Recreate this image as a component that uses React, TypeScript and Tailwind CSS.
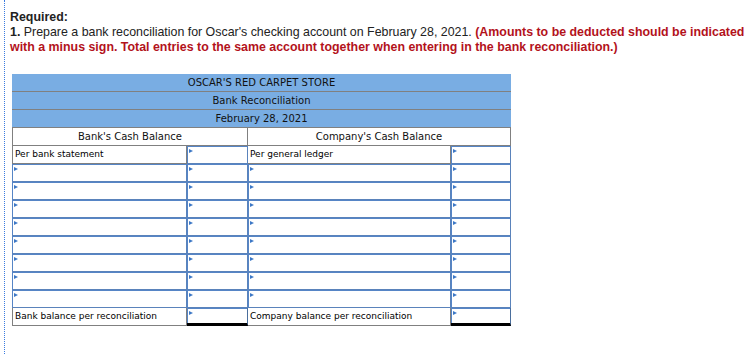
import React from "react";

const GRAY = "border-[#808080]";

// small blue flag that marks an input cell
const Marker = () => (
  <span className="absolute left-[1px] top-[2px] w-0 h-0 border-l-[4px] border-l-[#3d78c6] border-y-[2.5px] border-y-transparent" />
);

const InputCell = ({ w, total = false }: { w: string; total?: boolean }) => (
  <div
    className={`${w} h-full border-r ${total ? "border-r-[#4a6e9c] border-b-[3px] border-b-black" : "border-b border-[#5a83bb]"}`}
  >
    <div className="relative h-full border-t border-l border-[#5685c6]">
      <Marker />
    </div>
  </div>
);

const Label = ({ w, text, first = false }: { w: string; text: string; first?: boolean }) => (
  <div
    className={`${w} h-full border-r border-b ${GRAY} ${first ? "border-l" : ""} flex items-center pl-[2px] text-[9px] text-black`}
  >
    {text}
  </div>
);

const HeaderRow = ({ text }: { text: string }) => (
  <div className={`h-[18px] w-[499px] bg-[#79ade3] border-b ${GRAY} flex items-center justify-center text-[10px] text-[#111]`}>
    {text}
  </div>
);

export default function App() {
  const inputRows = Array.from({ length: 8 }, (_, i) => i);

  return (
    <div className="min-h-[354px] bg-white">
      <div className="ml-[4px] min-h-[354px] border-l border-dotted border-[#3a7be0] pl-[5px] pt-[10px]">
        <div className="w-[738px] font-['Liberation_Sans',Arial,sans-serif] text-[12.4px] text-[#222]">
          <p className="font-bold leading-[15px]">Required:</p>
          <p className="leading-[14.5px]">
            <span className="font-bold">1.</span> Prepare a bank reconciliation for Oscar's checking account on February 28, 2021.{" "}
            <span className="font-bold text-[#b3121b]">
              (Amounts to be deducted should be indicated with a minus sign. Total entries to the same account together when entering in the bank reconciliation.)
            </span>
          </p>
        </div>

        <div className="ml-[2px] mt-[20px] w-[499px] font-['DejaVu_Sans',Verdana,sans-serif]">
          <HeaderRow text="OSCAR'S RED CARPET STORE" />
          <HeaderRow text="Bank Reconciliation" />
          <HeaderRow text="February 28, 2021" />

          <div className="flex h-[18px] text-[10px] text-[#111]">
            <div className={`w-[236px] h-full border-l border-r border-b ${GRAY} flex items-center justify-center`}>
              Bank's Cash Balance
            </div>
            <div className={`w-[263px] h-full border-r border-b ${GRAY} flex items-center justify-center`}>
              Company's Cash Balance
            </div>
          </div>

          <div className="flex h-[18px]">
            <Label w="w-[175px]" text="Per bank statement" first />
            <InputCell w="w-[61px]" />
            <Label w="w-[203px]" text="Per general ledger" />
            <InputCell w="w-[60px]" />
          </div>

          {inputRows.map((i) => (
            <div key={i} className="flex h-[18px]">
              <InputCell w="w-[175px]" />
              <InputCell w="w-[61px]" />
              <InputCell w="w-[203px]" />
              <InputCell w="w-[60px]" />
            </div>
          ))}

          <div className="flex h-[18px]">
            <Label w="w-[175px]" text="Bank balance per reconciliation" first />
            <InputCell w="w-[61px]" total />
            <Label w="w-[203px]" text="Company balance per reconciliation" />
            <InputCell w="w-[60px]" total />
          </div>
        </div>
      </div>
    </div>
  );
}
